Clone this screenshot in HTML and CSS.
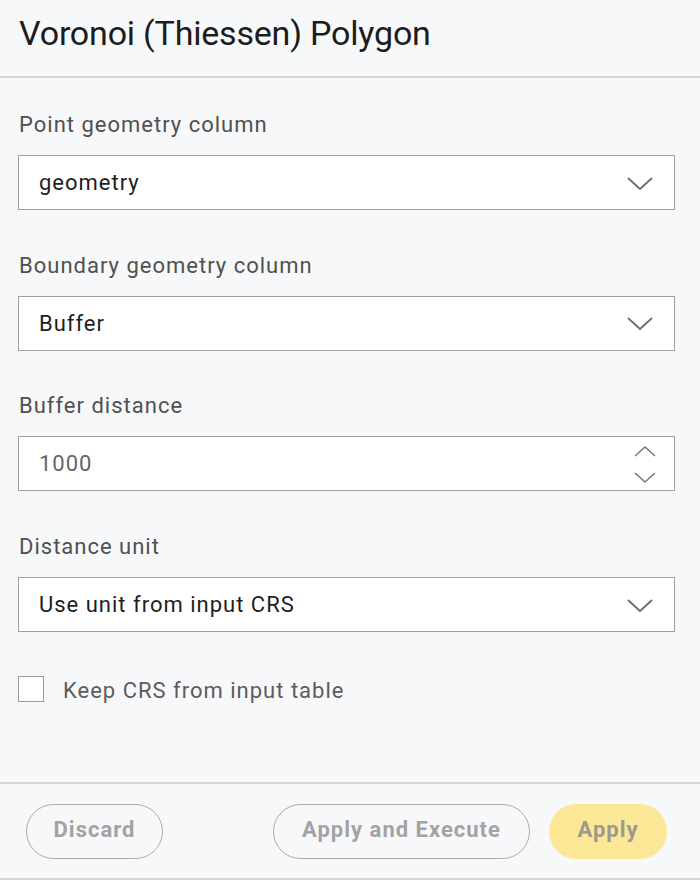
FILE: index.html
```html
<!DOCTYPE html>
<html>
<head>
<meta charset="utf-8">
<link rel="stylesheet" href="styles.css">
</head>
<body>
<div class="panel">
  <header class="header">
    <h1 class="title">Voronoi (Thiessen) Polygon</h1>
  </header>
  <main class="form">
    <div class="field">
      <label class="label">Point geometry column</label>
      <div class="select">
        <span class="value">geometry</span>
        <svg class="chev" width="28" height="16" viewBox="0 0 28 16"><path d="M2 2 L14 13 L26 2" fill="none" stroke="#6b6b6b" stroke-width="1.8"/></svg>
      </div>
    </div>
    <div class="field">
      <label class="label">Boundary geometry column</label>
      <div class="select">
        <span class="value">Buffer</span>
        <svg class="chev" width="28" height="16" viewBox="0 0 28 16"><path d="M2 2 L14 13 L26 2" fill="none" stroke="#6b6b6b" stroke-width="1.8"/></svg>
      </div>
    </div>
    <div class="field">
      <label class="label">Buffer distance</label>
      <div class="select number">
        <span class="value muted">1000</span>
        <div class="spinner">
          <svg width="24" height="14" viewBox="0 0 24 14"><path d="M2 12 L12 3 L22 12" fill="none" stroke="#7a7a7a" stroke-width="1.6"/></svg>
          <svg width="24" height="14" viewBox="0 0 24 14"><path d="M2 2 L12 11 L22 2" fill="none" stroke="#7a7a7a" stroke-width="1.6"/></svg>
        </div>
      </div>
    </div>
    <div class="field">
      <label class="label">Distance unit</label>
      <div class="select">
        <span class="value">Use unit from input CRS</span>
        <svg class="chev" width="28" height="16" viewBox="0 0 28 16"><path d="M2 2 L14 13 L26 2" fill="none" stroke="#6b6b6b" stroke-width="1.8"/></svg>
      </div>
    </div>
    <div class="check">
      <span class="box"></span>
      <span class="check-label">Keep CRS from input table</span>
    </div>
  </main>
  <footer class="footer">
    <button class="btn outline discard">Discard</button>
    <div class="spacer"></div>
    <button class="btn outline exec">Apply and Execute</button>
    <button class="btn primary">Apply</button>
  </footer>
</div>
</body>
</html>
```

FILE: styles.css
```css
html, body {
  margin: 0;
  padding: 0;
  background: #f7f8fa;
  font-family: Roboto, "Liberation Sans", sans-serif;
}
.panel {
  width: 700px;
  height: 880px;
  display: flex;
  flex-direction: column;
  box-sizing: border-box;
}
.header {
  height: 76px;
  border-bottom: 2px solid #d6d6d8;
  box-sizing: content-box;
  display: flex;
  align-items: flex-start;
}
.title {
  margin: 0;
  padding: 13px 0 0 19px;
  font-size: 34px;
  font-weight: 400;
  line-height: 40px;
  color: #1c1c1c;
  letter-spacing: -0.2px;
}
.form {
  flex: 1;
  padding: 34px 25px 0 18px;
  display: flex;
  flex-direction: column;
}
.field {
  display: flex;
  flex-direction: column;
  margin-bottom: 42.7px;
}
.label {
  font-size: 22px;
  line-height: 26px;
  color: #505050;
  letter-spacing: 1px;
  margin-left: 1px;
  margin-bottom: 17px;
}
.select {
  height: 55px;
  box-sizing: border-box;
  border: 1.5px solid #a0a0a0;
  background: #ffffff;
  display: flex;
  align-items: center;
  justify-content: space-between;
  padding: 0 20px 0 20px;
}
.value {
  font-size: 22px;
  color: #1e1e1e;
  letter-spacing: 1px;
}
.value.muted {
  color: #666;
}
.chev {
  margin-top: 2px;
}
.number {
  padding-right: 17px;
}
.spinner {
  display: flex;
  flex-direction: column;
  gap: 13px;
  margin-top: 2px;
}
.check {
  display: flex;
  align-items: center;
  gap: 19px;
  margin-top: 1px;
}
.box {
  width: 26px;
  height: 26px;
  box-sizing: border-box;
  border: 1.5px solid #9a9a9a;
  background: #fff;
}
.check-label {
  font-size: 22px;
  color: #5c5c5c;
  letter-spacing: 1px;
  margin-top: 2px;
}
.footer {
  height: 94px;
  border-top: 2px solid #d6d6d8;
  border-bottom: 2px solid #d6d6d8;
  display: flex;
  align-items: center;
  padding: 0 33px 0 26px;
  gap: 19px;
}
.spacer {
  flex: 1;
}
.btn {
  height: 55px;
  border-radius: 28px;
  font-family: Roboto, "Liberation Sans", sans-serif;
  font-size: 22px;
  font-weight: 700;
  letter-spacing: 1px;
  color: #a3a3a3;
  background: transparent;
  padding: 0 0 3px 0;
}
.outline {
  border: 1.5px solid #acacac;
}
.discard {
  width: 137px;
}
.exec {
  width: 257px;
}
.primary {
  width: 118px;
  border: none;
  background: #fbe796;
  color: #9c9a8c;
}
```
